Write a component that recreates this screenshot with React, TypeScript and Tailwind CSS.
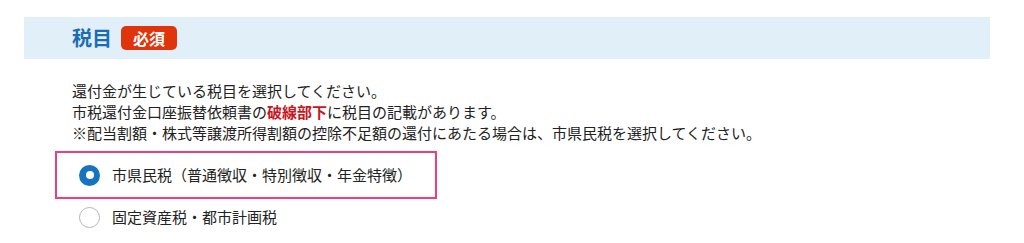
import React from "react";

const font = { fontFamily: '"Noto Sans CJK JP", "Noto Sans", sans-serif' };

function Radio({ checked }: { checked: boolean }) {
  return checked ? (
    <span className="flex h-[21px] w-[21px] shrink-0 items-center justify-center rounded-full bg-[#1673c2]">
      <span className="h-[8px] w-[8px] rounded-full bg-white" />
    </span>
  ) : (
    <span className="h-[21px] w-[21px] shrink-0 rounded-full border border-[#b5b5b5] bg-white" />
  );
}

export default function App() {
  return (
    <div className="h-[243px] w-[1024px] bg-white pt-[17px] pl-[24px] text-[#222]" style={font}>
      <div className="flex h-[42px] w-[966px] items-center gap-[9px] bg-[#e1eff9] pl-[48px]">
        <span className="text-[20px] font-bold text-[#1b6cb5]">税目</span>
        <span className="flex h-[24px] items-center rounded-[5px] bg-[#e0340c] px-[12px] text-[16px] font-bold leading-none text-white">
          必須
        </span>
      </div>

      <div className="mt-[21px] pl-[48px] text-[15px] leading-[21px]">
        <p>還付金が生じている税目を選択してください。</p>
        <p>
          市税還付金口座振替依頼書の<span className="font-bold text-[#c8161d]">破線部下</span>に税目の記載があります。
        </p>
        <p>※配当割額・株式等譲渡所得割額の控除不足額の還付にあたる場合は、市県民税を選択してください。</p>
      </div>

      <div className="mt-[8px] ml-[31px] flex h-[48px] w-[382px] items-center gap-[12px] border-2 border-[#ee3f7a] pl-[22px] text-[15px]">
        <Radio checked />
        <span>市県民税（普通徴収・特別徴収・年金特徴）</span>
      </div>
      <div className="mt-[7px] flex items-center gap-[12px] pl-[55px] text-[15px]">
        <Radio checked={false} />
        <span>固定資産税・都市計画税</span>
      </div>
    </div>
  );
}
